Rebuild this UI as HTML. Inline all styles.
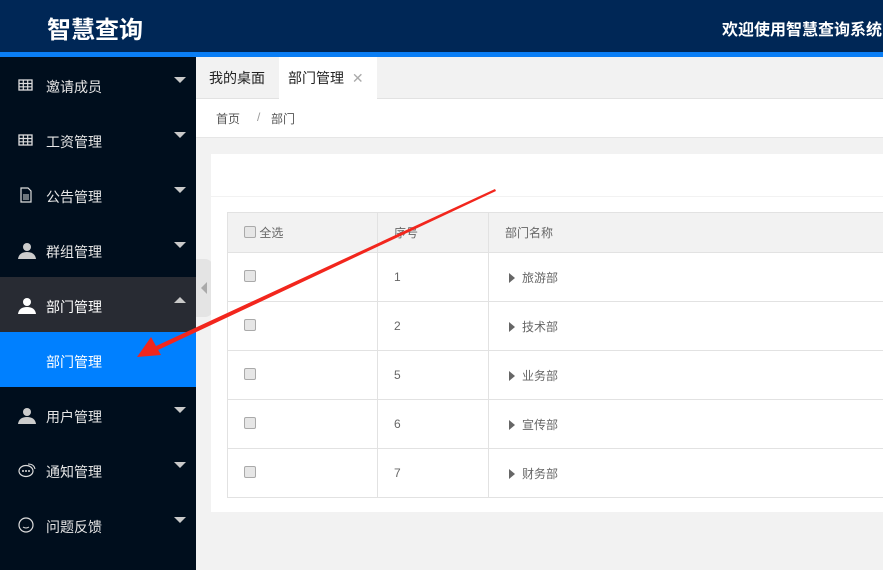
<!DOCTYPE html>
<html><head><meta charset="utf-8"><style>
*{margin:0;padding:0;box-sizing:border-box}
body{width:883px;height:570px;overflow:hidden;background:#f2f2f2;font-family:"Liberation Sans","Noto Sans CJK SC",sans-serif;position:relative}
.hd{position:absolute;left:0;top:0;width:883px;height:52px;background:#002756}
.bar{position:absolute;left:0;top:52px;width:883px;height:5px;background:#0a7ef5}
.logo{position:absolute;left:47px;top:10px;color:#fff;font-size:24px;font-weight:bold}
.wel{position:absolute;left:722px;top:16px;color:#fff;font-size:16px;font-weight:bold;white-space:nowrap}
.sb{position:absolute;left:0;top:57px;width:196px;height:513px;background:#000e1d}
.it{height:55px;position:relative;color:#e6e6e6;font-size:14px;font-weight:normal}
.it span{position:absolute;left:46px;top:20px}
.it i{position:absolute;left:18px;top:20px;width:16px;height:16px}
.it b{position:absolute;left:174px;top:20px;border-left:6px solid transparent;border-right:6px solid transparent;border-top:6px solid #c9c9c9}
.it b.up{border-top:none;border-bottom:6px solid #c9c9c9}
.act{background:#282b33}
.sub{background:#0080ff;color:#fff}
.tabs{position:absolute;left:196px;top:57px;width:687px;height:42px;background:#f2f2f2;border-bottom:1px solid #e2e2e2}
.t{position:absolute;top:0;height:42px;line-height:42px;font-size:14px;color:#222}
.crumb{position:absolute;left:196px;top:99px;width:687px;height:39px;background:#fff;font-size:12px;color:#555;border-bottom:1px solid #e6e6e6}
.card{position:absolute;left:211px;top:154px;width:672px;height:358px;background:#fff}
table{position:absolute;left:227px;top:212px;border-collapse:collapse;font-size:12px;color:#666;table-layout:fixed;width:700px}
td{border:1px solid #e2e2e2;padding-left:16px;height:49px}
tr.h td{background:#f2f2f2;height:40px}
.cb{display:inline-block;width:12px;height:12px;border:1px solid #aaa;border-radius:2px;background:#e6e6e6;vertical-align:-1px}
.tri{display:inline-block;border-top:5px solid transparent;border-bottom:5px solid transparent;border-left:6px solid #666;margin:0 7px 0 4px;vertical-align:-1px}
.handle{position:absolute;left:196px;top:259px;width:17px;height:58px;background:#e4e4e4;border-radius:0 8px 8px 0}
</style></head><body>
<div class="hd"><div class="logo">智慧查询</div><div class="wel">欢迎使用智慧查询系统</div></div>
<div class="bar"></div>
<div class="sb">
<div class="it"><i><svg width="16" height="16"><rect x="1" y="3" width="13" height="10" fill="none" stroke="#ddd" stroke-width="1.3"/><path d="M1 6.5h13M1 9.8h13M5.3 3v10M9.7 3v10" stroke="#ddd" stroke-width="1.2"/></svg></i><span>邀请成员</span><b></b></div>
<div class="it"><i><svg width="16" height="16"><rect x="1" y="3" width="13" height="10" fill="none" stroke="#ddd" stroke-width="1.3"/><path d="M1 6.5h13M1 9.8h13M5.3 3v10M9.7 3v10" stroke="#ddd" stroke-width="1.2"/></svg></i><span>工资管理</span><b></b></div>
<div class="it"><i><svg width="16" height="16"><path d="M3 1h7l3 3v11H3z" fill="none" stroke="#ddd" stroke-width="1.2"/><path d="M5 8h6M5 10h6M5 12h6" stroke="#ddd"/></svg></i><span>公告管理</span><b></b></div>
<div class="it"><i><svg width="18" height="18"><circle cx="9" cy="5" r="4" fill="#ccc"/><path d="M0 17q1-7 9-7t9 7z" fill="#ccc"/></svg></i><span>群组管理</span><b></b></div>
<div class="it act"><i><svg width="18" height="18"><circle cx="9" cy="5" r="4" fill="#fff"/><path d="M0 17q1-7 9-7t9 7z" fill="#fff"/></svg></i><span style="color:#fff">部门管理</span><b class="up"></b></div>
<div class="it sub"><span>部门管理</span></div>
<div class="it"><i><svg width="18" height="18"><circle cx="9" cy="5" r="4" fill="#ccc"/><path d="M0 17q1-7 9-7t9 7z" fill="#ccc"/></svg></i><span>用户管理</span><b></b></div>
<div class="it"><i><svg width="18" height="18"><ellipse cx="8" cy="9" rx="7" ry="5.5" fill="none" stroke="#ddd" stroke-width="1.2"/><circle cx="5" cy="9" r="1" fill="#ddd"/><circle cx="8" cy="9" r="1" fill="#ddd"/><circle cx="11" cy="9" r="1" fill="#ddd"/><path d="M10 2q6 0 7 5" fill="none" stroke="#ddd"/></svg></i><span>通知管理</span><b></b></div>
<div class="it"><i><svg width="16" height="18"><circle cx="8" cy="8" r="7" fill="none" stroke="#ddd" stroke-width="1.2"/><path d="M5 10q3 2 6 0" fill="none" stroke="#ddd"/></svg></i><span>问题反馈</span><b></b></div>
</div>
<div class="handle"><div style="position:absolute;left:5px;top:23px;border-top:6px solid transparent;border-bottom:6px solid transparent;border-right:6px solid #aaa"></div></div>
<div class="tabs">
<div class="t" style="left:13px">我的桌面</div>
<div class="t" style="left:83px;width:98px;background:#fff;height:43px;padding-left:9px">部门管理 <span style="color:#aaa;margin-left:4px">✕</span></div>
</div>
<div class="crumb"><span style="position:absolute;left:20px;top:11px">首页</span><span style="position:absolute;left:61px;top:11px;color:#999">/</span><span style="position:absolute;left:75px;top:11px">部门</span></div>
<div class="card"><div style="position:absolute;left:0;top:42px;width:672px;border-top:1px solid #f2f2f2"></div></div>
<table>
<colgroup><col style="width:150px"><col style="width:111px"><col style="width:439px"></colgroup>
<tr class="h"><td><span class="cb"></span> 全选</td><td>序号</td><td>部门名称</td></tr>
<tr><td><span class="cb"></span></td><td>1</td><td><span class="tri"></span>旅游部</td></tr>
<tr><td><span class="cb"></span></td><td>2</td><td><span class="tri"></span>技术部</td></tr>
<tr><td><span class="cb"></span></td><td>5</td><td><span class="tri"></span>业务部</td></tr>
<tr><td><span class="cb"></span></td><td>6</td><td><span class="tri"></span>宣传部</td></tr>
<tr><td><span class="cb"></span></td><td>7</td><td><span class="tri"></span>财务部</td></tr>
</table>
<svg style="position:absolute;left:0;top:0" width="883" height="570"><polygon points="495,189 496,191 158,350 156,346" fill="#f2261d"/><polygon points="137,357 151,337 161,355" fill="#f2261d"/></svg>
</body></html>
